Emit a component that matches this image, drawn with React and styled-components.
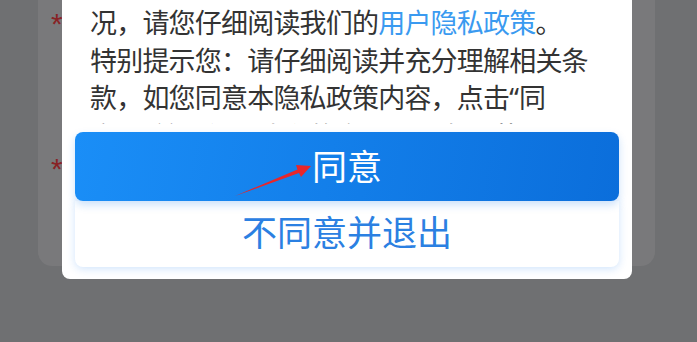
import React from 'react';
import styled, { createGlobalStyle } from 'styled-components';

const GlobalStyle = createGlobalStyle`
    body {
        margin: 0;
        font-family: 'Noto Sans CJK SC', 'Noto Sans', sans-serif;
    }
`;

const Page = styled.div`
    position: relative;
    width: 697px;
    height: 342px;
    box-sizing: border-box;
    padding: 0 42px 76px 38px;
    background: #6f7072;
    overflow: hidden;
    display: flex;
`;

const Card = styled.div`
    flex: 1;
    background: #79797b;
    border-radius: 0 0 14px 14px;
    padding: 9px 0 0 13px;
    display: flex;
    flex-direction: column;
`;

const FieldRow = styled.div`
    flex-shrink: 0;
    height: 145px;
`;

const Asterisk = styled.span`
    font-family: 'Liberation Sans', sans-serif;
    font-size: 30px;
    line-height: 30px;
    color: #882326;
`;

const Modal = styled.div`
    position: absolute;
    left: 62px;
    top: -40px;
    bottom: 63px;
    width: 570px;
    background: #ffffff;
    border-radius: 0 0 8px 8px;
    display: flex;
    flex-direction: column;
    padding-bottom: 12px;
    box-sizing: border-box;
`;

const TextViewport = styled.div`
    flex: 1;
    overflow: hidden;
    padding: 5.5px 28px 0;
    font-size: 27px;
    letter-spacing: -0.8px;
    line-height: 37.5px;
    color: #333333;
    white-space: nowrap;
`;

const Line = styled.div``;

const Quote = styled.span`
    font-family: 'Noto Sans', sans-serif;
    letter-spacing: 0;
`;

const PolicyLink = styled.span`
    color: #3a9af0;
`;

const ButtonGroup = styled.div`
    margin: 8px 13px 0;
    display: flex;
    flex-direction: column;
`;

const AgreeButton = styled.div`
    position: relative;
    z-index: 1;
    height: 69px;
    box-sizing: border-box;
    padding-bottom: 5px;
    border-radius: 8px;
    background: linear-gradient(100deg, #1a8ef7 0%, #0b6edb 100%);
    box-shadow: 0 4px 8px rgba(20, 120, 230, 0.22);
    color: #ffffff;
    font-size: 35px;
    display: flex;
    align-items: center;
    justify-content: center;
`;

const DeclineButton = styled.div`
    height: 66px;
    border-radius: 0 0 8px 8px;
    background: #ffffff;
    box-shadow: 0 2px 8px rgba(40, 130, 240, 0.22);
    color: #2b80e2;
    font-size: 35px;
    display: flex;
    align-items: center;
    justify-content: center;
    padding-bottom: 7px;
    box-sizing: border-box;
`;

const Annotation = styled.svg`
    position: absolute;
    z-index: 2;
    left: 0;
    top: 0;
    pointer-events: none;
`;

function App() {
    return (
        <>
            <GlobalStyle />
            <Page>
                <Card>
                    <FieldRow>
                        <Asterisk>*</Asterisk>
                    </FieldRow>
                    <FieldRow>
                        <Asterisk>*</Asterisk>
                    </FieldRow>
                </Card>
                <Modal>
                    <TextViewport>
                        <Line>您在使用我们的产品与服务时，我们将按照本政策收集相关情</Line>
                        <Line>
                            况，请您仔细阅读我们的
                            <PolicyLink>用户隐私政策</PolicyLink>。
                        </Line>
                        <Line>特别提示您：请仔细阅读并充分理解相关条</Line>
                        <Line>
                            款，如您同意本隐私政策内容，点击<Quote>“</Quote>同
                        </Line>
                        <Line>
                            意<Quote>”</Quote>，并可使用我们的产品与服务，若不
                        </Line>
                    </TextViewport>
                    <ButtonGroup>
                        <AgreeButton>同意</AgreeButton>
                        <DeclineButton>不同意并退出</DeclineButton>
                    </ButtonGroup>
                </Modal>
                <Annotation width="697" height="342" viewBox="0 0 697 342">
                    <polygon
                        points="235,196 297.5,169.5 296,165 311,166 301,177 299,173"
                        fill="#e8262a"
                    />
                </Annotation>
            </Page>
        </>
    );
}

export default App;
